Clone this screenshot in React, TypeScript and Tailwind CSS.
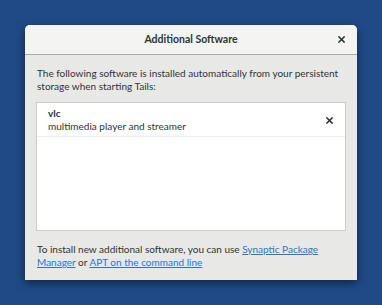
const CloseIcon = ({ className }: { className?: string }) => (
  <svg viewBox="0 0 8 8" className={className} fill="none" stroke="currentColor" strokeWidth={1.7} strokeLinecap="square">
    <path d="M1 1L7 7M7 1L1 7" />
  </svg>
)

const App = () => {
  return (
    <div
      className="w-[382px] h-[305px] bg-[#1f4a86] pt-[25px] pl-[25px] text-[#2e3436] overflow-hidden"
      style={{ fontFamily: 'Lato, "Noto Sans", sans-serif' }}
    >
      <div className="w-[332px] h-[255px] bg-[#e8e8e7] rounded-t-[5px] shadow-[0_3px_9px_rgba(0,0,0,0.5)] flex flex-col">
        {/* Title bar */}
        <div className="relative h-[30px] shrink-0 bg-[#f4f4f3] rounded-t-[5px] border-b border-[#a9a9a6] flex items-center justify-center">
          <span className="text-[10.5px] font-bold">Additional Software</span>
          <CloseIcon className="absolute right-[12px] top-[11px] w-[7px] h-[7px]" />
        </div>

        {/* Body */}
        <div className="flex flex-col pl-[11px] pt-[12px]">
          <p className="text-[10px] leading-[13px] pl-[1px] w-[310px]">
            The following software is installed automatically from your persistent storage when starting Tails:
          </p>

          <div className="mt-[9px] h-[129px] w-[310px] bg-white border border-[#cfcbc6]">
            <div className="h-[34px] border-b border-[#ededed] flex items-center pl-[11px] pr-[12px]">
              <div className="flex-1 flex flex-col pt-[1px]">
                <span className="text-[10px] leading-[13px] font-bold">vlc</span>
                <span className="text-[10px] leading-[13px]">multimedia player and streamer</span>
              </div>
              <CloseIcon className="w-[7px] h-[7px] mt-[2px]" />
            </div>
          </div>

          <p className="mt-[12px] text-[10px] leading-[13px] pl-[1px] w-[300px]">
            To install new additional software, you can use{" "}
            <a href="#" className="text-[#2a76c6] underline">Synaptic Package Manager</a> or{" "}
            <a href="#" className="text-[#2a76c6] underline">APT on the command line</a>
          </p>
        </div>
      </div>
    </div>
  )
}

export default App
